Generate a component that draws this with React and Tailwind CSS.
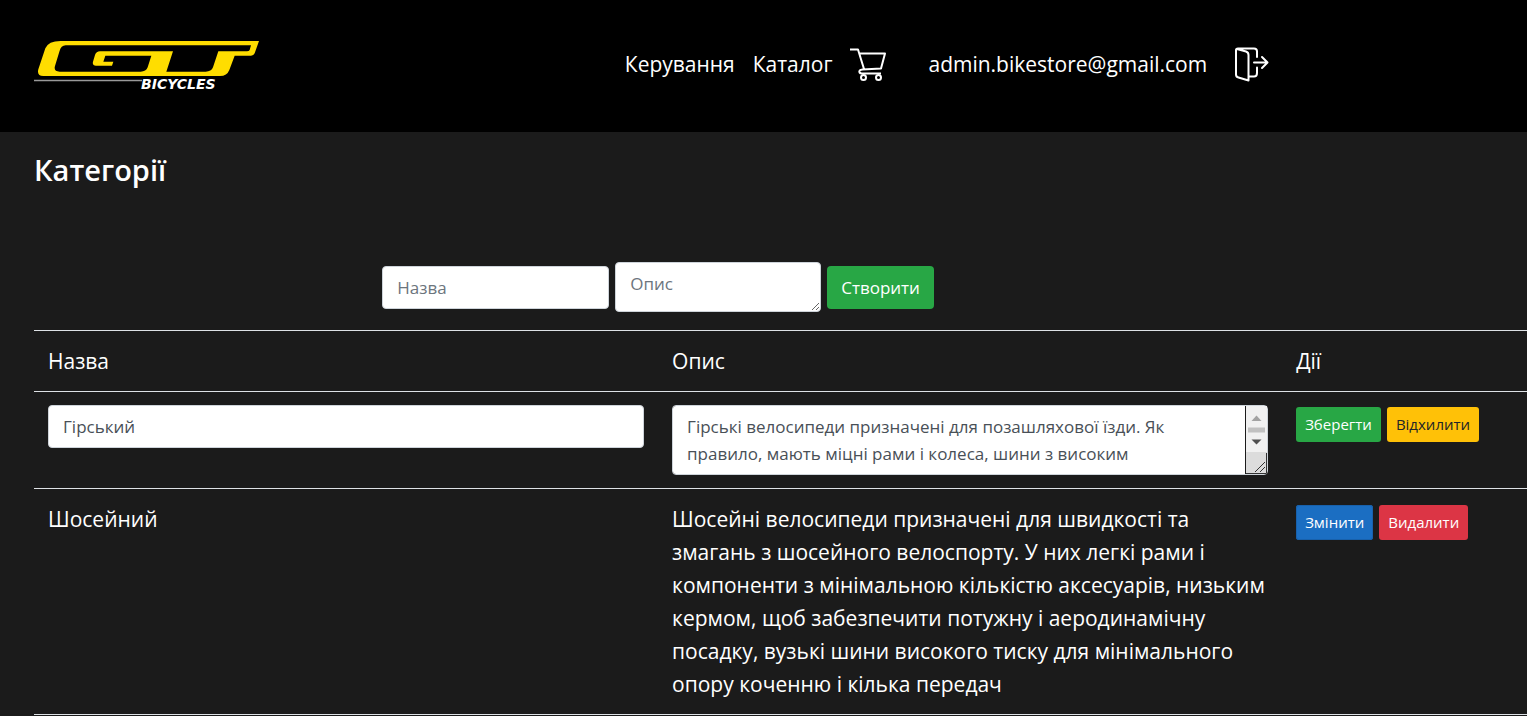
import React from "react";

const field =
  "rounded border border-[#ced4da] bg-white pl-[14px] text-[17px] leading-[27px] text-[#495057] placeholder:text-[#6c757d]";
const smallButton =
  "h-[35px] rounded-[3px] px-[9px] text-[15px] leading-[23px] whitespace-nowrap";

function Logo() {
  return (
    <svg width="226" height="52" viewBox="0 0 226 52" aria-label="GT Bicycles" role="img">
      <g transform="translate(-10 -10) scale(0.33333)">
        <path
          fill="#ffdd00"
          fillRule="evenodd"
          d="M110 33H705L692 70Q689 77 681 77H632L616 120Q609 138 588 138H58Q38 138 43 118L64 55Q73 33 110 33ZM125 46Q111 46 106 65L93 108Q88 125 107 125H350Q366 125 371 112L382 77H244L238 95H268L264 107H216Q204 107 207 95L213 75Q217 64 228 64H447L427 125H545Q562 125 567 112L583 64H669Q675 64 677 60L681 46Z"
        />
      </g>
      <path d="M0 40.500H108" stroke="#999" strokeWidth="1.500" />
      <text x="107" y="49" fill="#fff" fontFamily="DejaVu Sans, sans-serif" fontSize="14" fontWeight="700" fontStyle="italic">
        BICYCLES
      </text>
    </svg>
  );
}

function CartIcon() {
  return (
    <svg width="38" height="34" viewBox="0 0 38 34" fill="none" stroke="#fff" strokeWidth="2" strokeLinejoin="round">
      <path d="M0 1.500H8L14 21M9 5.500H35L31 20.500L12.500 21.500Q8.500 22 9.500 24.500Q10 25.500 12 25.500H31" />
      <circle cx="13.500" cy="29.500" r="2.500" />
      <circle cx="28.500" cy="29.500" r="2.500" />
    </svg>
  );
}

function LogoutIcon() {
  return (
    <svg width="34" height="36" viewBox="0 0 34 36" fill="none" stroke="#fff" strokeWidth="2" strokeLinecap="round" strokeLinejoin="round">
      <path d="M2 2L11 4.500Q13.500 5.300 13.500 8V33.500L3.500 30.500Q1 30 1 27.500V3Q1 1.500 3 1.500H19Q22 1.500 22 4.500V10M22 20.500V26Q22 29.500 19 29.500H14M19 15.500H32M27 10L32.500 15.500L27 21" />
    </svg>
  );
}

function ScrollRail() {
  return (
    <div className="pointer-events-none absolute inset-y-px right-px flex w-[22px] flex-col border-l border-[#1b1b1b] bg-[#f1f1f1]" aria-hidden="true">
      <svg className="w-full flex-1" viewBox="0 0 21 46">
        <path d="M5.500 15H15.500L10.500 9.500Z" fill="#a3a3a3" />
        <path d="M2 21.500H19V26.500H2Z" fill="#c1c1c1" />
        <path d="M5.500 33.500H15.500L10.500 38.500Z" fill="#505050" />
      </svg>
      <svg className="h-[22px] w-full bg-[#dcdcdc]" viewBox="0 0 21 22">
        <path d="M9 20L19 10M14 20L19 15M20.500 1V21.500H0" stroke="#333" fill="none" />
      </svg>
    </div>
  );
}

export default function App() {
  return (
    <div className="min-h-screen bg-[#1b1b1b] font-['Open_Sans','Noto_Sans',sans-serif] text-[21px] leading-[33px] text-white">
      <header className="flex h-[132px] items-center bg-black pl-[34px]">
        <a href="#home"><Logo /></a>
        <nav className="mr-[17%] ml-auto flex items-center pr-1 pb-[3px]">
          <a href="#admin">Керування</a>
          <a href="#catalog" className="ml-[18px]">Каталог</a>
          <a href="#cart" aria-label="Кошик" className="ml-[18px]"><CartIcon /></a>
          <a href="#account" className="ml-10">admin.bikestore@gmail.com</a>
          <button aria-label="Вийти" className="ml-7"><LogoutIcon /></button>
        </nav>
      </header>

      <main className="pl-[34px]">
        <h1 className="pt-[18px] text-[29px] leading-10 font-semibold">Категорії</h1>

        <form className="mt-[72px] flex w-[83.600%] items-center justify-center gap-[6px]" onSubmit={(e) => e.preventDefault()}>
          <input aria-label="Назва" placeholder="Назва" className={`h-[43px] w-[227px] ${field}`} />
          <textarea aria-label="Опис" placeholder="Опис" className={`h-[50px] w-[206px] py-[7px] ${field}`} />
          <button className="h-[43px] rounded bg-[#28a745] px-[14px] text-[17px]">Створити</button>
        </form>

        <table className="mt-[18px] w-full table-fixed border-collapse text-left [&_td]:px-[14px] [&_td]:align-top [&_th]:px-[14px] [&_th]:pt-[14px] [&_th]:pb-[13px] [&_th]:font-normal [&_tr]:border-y [&_tr]:border-[#dee2e6]">
          <thead>
            <tr>
              <th className="w-[41.800%]">Назва</th>
              <th className="w-[41.800%]">Опис</th>
              <th>Дії</th>
            </tr>
          </thead>
          <tbody>
            <tr className="[&>td]:py-[13px]">
              <td><input aria-label="Назва категорії" defaultValue="Гірський" className={`block h-[43px] w-full ${field}`} /></td>
              <td>
                <div className="relative">
                  <textarea
                    aria-label="Опис категорії"
                    className={`block h-[70px] w-full resize-none py-[7px] pr-9 ${field}`}
                    defaultValue="Гірські велосипеди призначені для позашляхової їзди. Як правило, мають міцні рами і колеса, шини з високим протектором"
                  />
                  <ScrollRail />
                </div>
              </td>
              <td>
                <div className="flex gap-[6px] pt-0.5">
                  <button className={`bg-[#28a745] ${smallButton}`}>Зберегти</button>
                  <button className={`bg-[#ffc107] text-[#212529] ${smallButton}`}>Відхилити</button>
                </div>
              </td>
            </tr>
            <tr className="[&>td]:pt-[14px] [&>td]:pb-[13px]">
              <td>Шосейний</td>
              <td>
                Шосейні велосипеди призначені для швидкості та змагань з шосейного велоспорту. У них легкі рами і компоненти з мінімальною кількістю аксесуарів, низьким кермом, щоб забезпечити потужну і аеродинамічну посадку, вузькі шини високого тиску для мінімального опору коченню і кілька передач
              </td>
              <td>
                <div className="flex gap-[6px] pt-0.5">
                  <button className={`bg-[#1b6ec2] inset-ring inset-ring-[#1861ac] ${smallButton}`}>Змінити</button>
                  <button className={`bg-[#dc3545] ${smallButton}`}>Видалити</button>
                </div>
              </td>
            </tr>
          </tbody>
        </table>
      </main>
    </div>
  );
}
